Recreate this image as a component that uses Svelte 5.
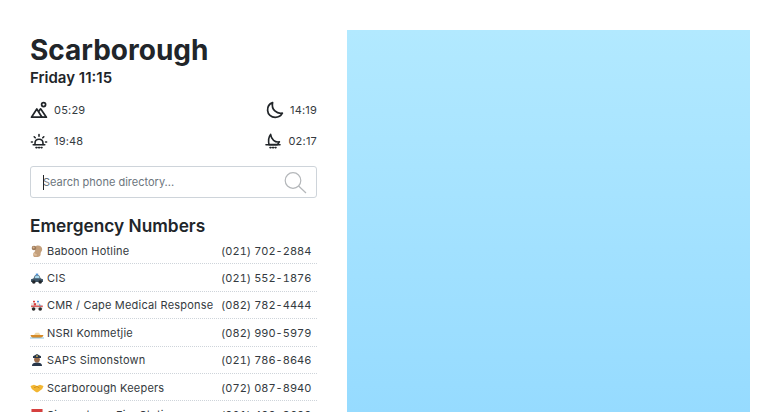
<script>
  const contacts = [
    { icon: 'monkey', name: 'Baboon Hotline', phone: '(021) 702-2884' },
    { icon: 'police', name: 'CIS', phone: '(021) 552-1876' },
    { icon: 'ambulance', name: 'CMR / Cape Medical Response', phone: '(082) 782-4444' },
    { icon: 'boat', name: 'NSRI Kommetjie', phone: '(082) 990-5979' },
    { icon: 'officer', name: 'SAPS Simonstown', phone: '(021) 786-8646' },
    { icon: 'hands', name: 'Scarborough Keepers', phone: '(072) 087-8940' },
    { icon: 'fire', name: 'Simonstown Fire Station', phone: '(021) 400-3600' }
  ];
</script>

<div class="page">
  <section class="info">
    <h1>Scarborough</h1>
    <p class="now">Friday 11:15</p>

    <div class="times">
      <div class="time">
        <svg width="18" height="18" viewBox="0 0 18 18" fill="none" stroke="#212529" stroke-width="1.7" stroke-linejoin="round">
          <path d="M1.500 16.200 6.800 8 12 16.200Z" />
          <path d="M8.600 10.400 10.600 7.800 16.400 16.200H12" />
          <circle cx="13.600" cy="3.600" r="2" />
        </svg>
        <span>05:29</span>
      </div>
      <div class="time">
        <svg width="18" height="18" viewBox="0 0 18 18" fill="none" stroke="#212529" stroke-width="1.7" stroke-linejoin="round">
          <path d="M6.600 1.600C3.400 2.800 1.400 5.800 1.600 9.400 1.800 13.400 5.200 16.400 9.200 16.400 12.200 16.400 15 14.800 16.400 12.200 11 13.200 5 8.800 6.600 1.600Z" />
        </svg>
        <span>14:19</span>
      </div>
      <div class="time">
        <svg width="18" height="18" viewBox="0 0 18 18" fill="none" stroke="#212529" stroke-width="1.6" stroke-linecap="round">
          <path d="M5 12.600V11.200C5 8.800 6.800 7.200 9 7.200S13 8.800 13 11.200V12.600" />
          <path d="M3.200 12.800H14.800" />
          <path d="M9 2.600V4.200M4.200 4.800 5.200 5.800M13.800 4.800 12.800 5.800M1.400 10H2.400M15.600 10H16.600" />
          <path d="M6 15.600H7M8.600 15.600H9.600M11.200 15.600H12" />
        </svg>
        <span>19:48</span>
      </div>
      <div class="time">
        <svg width="18" height="18" viewBox="0 0 18 18" fill="none" stroke="#212529" stroke-width="1.6" stroke-linecap="round" stroke-linejoin="round">
          <path d="M6.600 2.400C4.800 4.600 4.200 8.400 5 12.600H13.200C14.200 11.800 15 11 15.400 9.800 11 10.600 7.200 7.400 6.600 2.400Z" />
          <path d="M2 12.800H16" />
          <path d="M6 15.600H7M8.600 15.600H9.600M11.200 15.600H12" />
        </svg>
        <span>02:17</span>
      </div>
    </div>

    <div class="search">
      <input type="text" placeholder="Search phone directory..." />
      <svg class="search-icon" width="24" height="24" viewBox="0 0 24 24" fill="none" stroke="#b4b7ba" stroke-width="1.200">
        <circle cx="10" cy="9.500" r="7.800" />
        <path d="M15.600 15 23 22" />
      </svg>
    </div>

    <h2>Emergency Numbers</h2>
    <ul class="contacts">
      {#each contacts as contact}
        <li>
          <span class="label">
            <svg class="emoji" width="14" height="14" viewBox="0 0 14 14">
              {#if contact.icon === 'monkey'}
                <path d="M7 1.500C9.500 1 12.200 2.400 12.200 5.200 12.200 7.400 10.400 7.600 10.600 10 10.800 12 9.400 13 7.600 13H5.200C3.600 13 3 11.800 3.200 10.400 3.400 8.600 5.200 8 5.200 6 5.200 4.400 4.800 2.200 7 1.500Z" fill="#c4a07c" />
                <circle cx="4" cy="4" r="2.300" fill="#9c7a5a" />
                <circle cx="3.600" cy="3.600" r="1" fill="#d9b48f" />
                <path d="M3.500 8.500 7 10.500 6.400 12 3 11Z" fill="#dcbc9a" />
              {:else if contact.icon === 'police'}
                <path d="M3.400 7.400 5 4.200H9L10.800 7.400 13 8.200V11H1V8.200Z" fill="#3f5566" />
                <path d="M5.500 4.800H8.700L9.800 7.300H4.400Z" fill="#a8d8ee" />
                <rect x="5.800" y="2.600" width="2.400" height="1.600" fill="#4a90d9" />
                <circle cx="3.800" cy="11" r="1.800" fill="#22262a" />
                <circle cx="10.200" cy="11" r="1.800" fill="#22262a" />
              {:else if contact.icon === 'ambulance'}
                <path d="M1 5H9.200L12.800 8V11H1Z" fill="#e9e6e6" />
                <rect x="1" y="7.600" width="11.800" height="1.200" fill="#d6403f" />
                <path d="M9 5.800 11.400 8H9Z" fill="#7aa8c4" />
                <rect x="3.800" y="5.200" width="2.200" height="2.200" fill="#d6403f" />
                <rect x="3" y="2.800" width="2" height="1.600" fill="#d6403f" />
                <rect x="7" y="2.800" width="2" height="1.600" fill="#4a90d9" />
                <circle cx="3.600" cy="11" r="1.800" fill="#2b2b2b" />
                <circle cx="10.200" cy="11" r="1.800" fill="#2b2b2b" />
              {:else if contact.icon === 'boat'}
                <path d="M.5 9H13.500C12.800 10.800 11.800 12 10 12H3C1.800 12 1 10.600.5 9Z" fill="#d78b28" />
                <path d="M4 9 5.600 6.800H9L10.500 9Z" fill="#f0d9a8" />
                <rect x="0" y="11.500" width="14" height="1" fill="#8cc4e0" />
              {:else if contact.icon === 'officer'}
                <path d="M2 13C2 10.400 4.200 9.600 7 9.600S12 10.400 12 13Z" fill="#27364a" />
                <circle cx="7" cy="6.600" r="2.900" fill="#9a6a47" />
                <path d="M3 3.200 7 1 11 3.200V5H3Z" fill="#27364a" />
                <rect x="6.200" y="2.400" width="1.600" height="1.400" fill="#e3c35a" />
              {:else if contact.icon === 'hands'}
                <path d="M.5 5 4 3.800 7 5 10 3.800 13.500 5 12.200 8 7.800 11.200H6.200L1.800 8Z" fill="#f2b632" />
                <path d="M4 6.800 7 5.400 9.400 7" stroke="#c98a18" stroke-width=".8" fill="none" />
              {:else}
                <rect x="1.500" y="1" width="11" height="12" fill="#e6e3e1" />
                <rect x="1.500" y="1" width="11" height="3" fill="#d6403f" />
              {/if}
            </svg>
            {contact.name}
          </span>
          <span class="phone">{contact.phone}</span>
        </li>
      {/each}
    </ul>
  </section>

  <div class="map"></div>
</div>

<style>
  :global(html), :global(body) {
    margin: 0;
    height: 412px;
    overflow: hidden;
    background: #fff;
  }

  .page {
    display: flex;
    gap: 30px;
    height: 382px;
    padding: 30px 30px 0;
    overflow: hidden;
    font-family: Inter, "Noto Sans", sans-serif;
    color: #212529;
  }

  .info {
    flex: 0 0 287px;
    min-width: 0;
  }

  h1 {
    margin: 3px 0 0;
    font-size: 28px;
    font-weight: 700;
    line-height: 35px;
  }

  .now {
    margin: 0;
    font-size: 15px;
    font-weight: 600;
    line-height: 20px;
  }

  .times {
    display: grid;
    grid-template-columns: 1fr auto;
    row-gap: 13px;
    margin-top: 13px;
    margin-bottom: 16px;
  }

  .time {
    display: flex;
    align-items: center;
    gap: 6px;
    height: 18px;
    font-size: 11px;
    letter-spacing: 0.2px;
    color: #343a40;
  }

  .time:nth-child(even) {
    justify-self: end;
  }

  .search {
    position: relative;
    height: 32px;
    box-sizing: border-box;
    border: 1px solid #ced4da;
    border-radius: 3px;
  }

  input {
    display: block;
    width: 100%;
    height: 100%;
    box-sizing: border-box;
    padding: 0 12px;
    border: 0;
    outline: 0;
    background: transparent;
    font: 11px Inter, sans-serif;
  }

  input::placeholder {
    color: #6c757d;
    opacity: 1;
  }

  .search::before {
    content: "";
    position: absolute;
    left: 12px;
    top: 8px;
    width: 1px;
    height: 15px;
    background: #212529;
  }

  .search-icon {
    position: absolute;
    right: 9px;
    top: 4px;
  }

  h2 {
    margin: 17px 0 0;
    font-size: 17.300px;
    font-weight: 600;
    line-height: 22px;
  }

  .contacts {
    margin: 0;
    padding: 0;
    list-style: none;
  }

  li {
    display: flex;
    justify-content: space-between;
    align-items: center;
    height: 27.400px;
    padding-top: 1px;
    box-sizing: border-box;
    border-bottom: 1px dotted #ced4da;
    font-size: 11px;
    letter-spacing: 0.2px;
    color: #343a40;
  }

  .label {
    display: flex;
    align-items: center;
    gap: 3px;
    white-space: nowrap;
  }

  .phone {
    flex: 0 0 96px;
    font-variant-numeric: tabular-nums;
    letter-spacing: 0.03px;
    white-space: nowrap;
  }

  .map {
    flex: 1;
    background: linear-gradient(#b2e9ff, #96dbff);
  }
</style>
